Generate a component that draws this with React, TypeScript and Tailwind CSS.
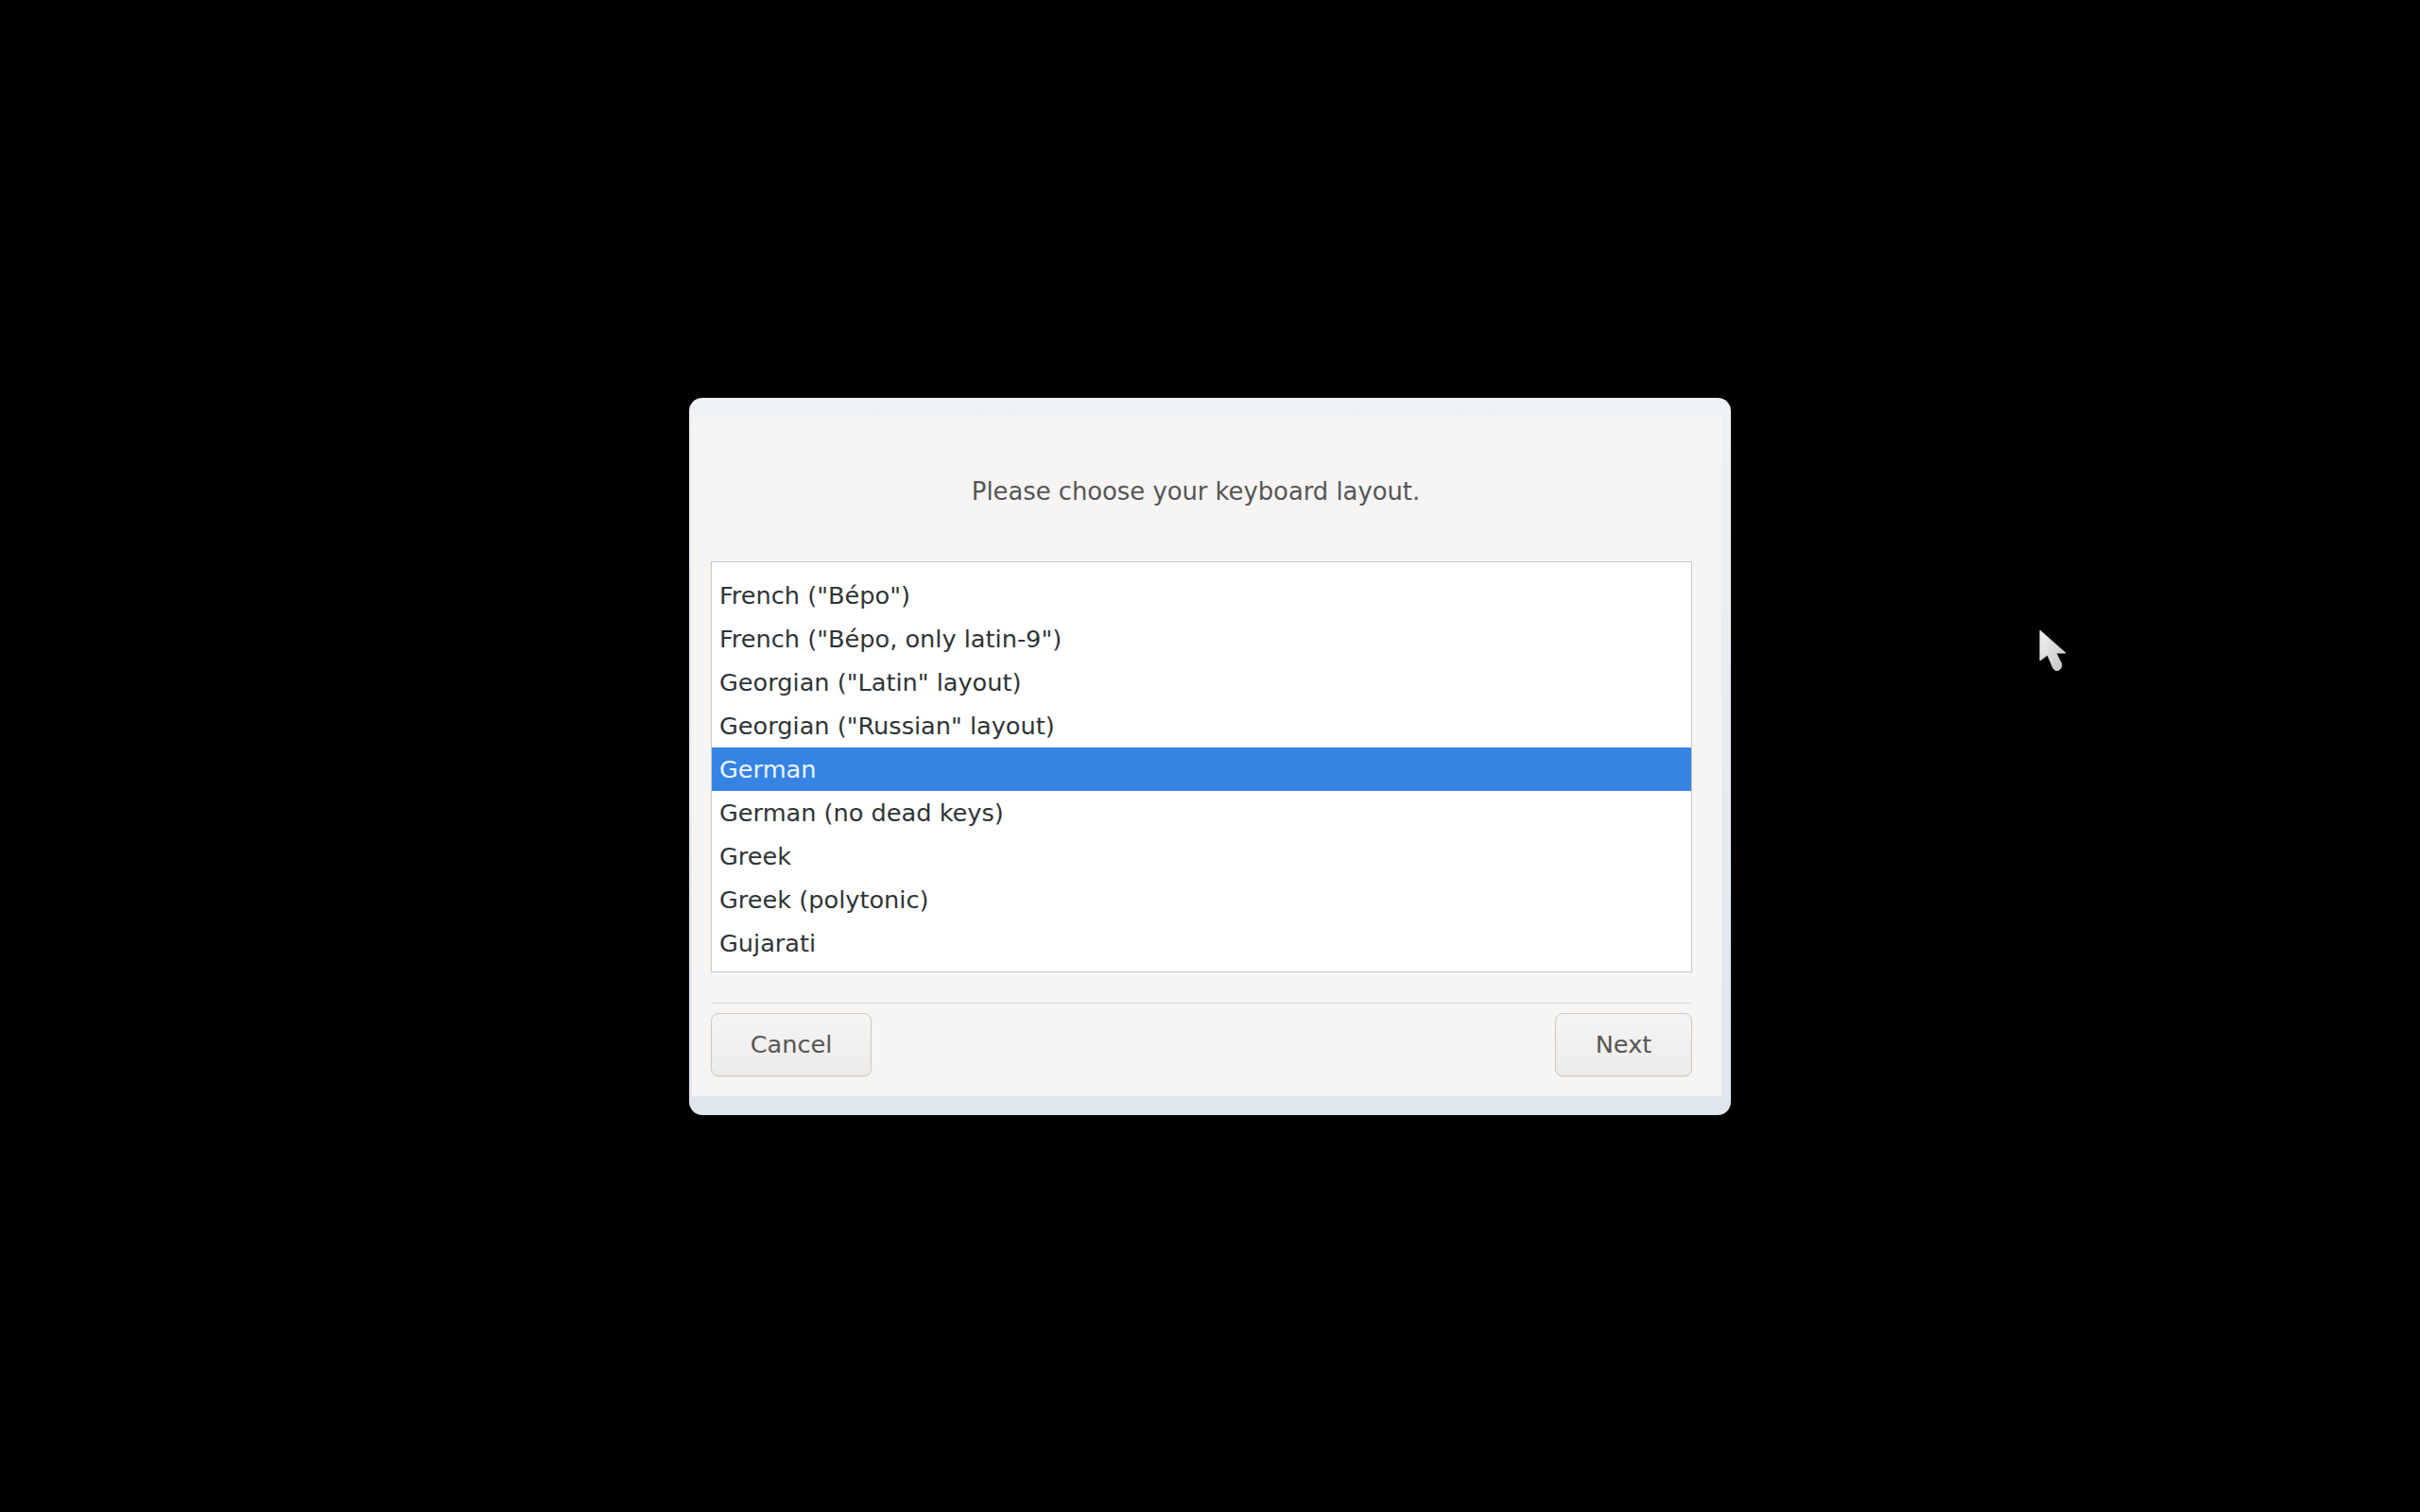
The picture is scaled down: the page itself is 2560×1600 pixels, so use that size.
const layouts = [
  'French ("Bépo")',
  'French ("Bépo, only latin-9")',
  'Georgian ("Latin" layout)',
  'Georgian ("Russian" layout)',
  "German",
  "German (no dead keys)",
  "Greek",
  "Greek (polytonic)",
  "Gujarati",
];

const selected = "German";

function Cursor() {
  return (
    <svg
      className="absolute left-[2156px] top-[665px]"
      width="34"
      height="50"
      viewBox="0 0 34 50"
      aria-hidden="true"
    >
      <defs>
        <linearGradient id="cur" x1="0" y1="0" x2="1" y2="1">
          <stop offset="0" stopColor="#f2f2f2" />
          <stop offset="1" stopColor="#c4c4c4" />
        </linearGradient>
      </defs>
      <path
        d="M2 2 L2 34 L10 28 L16 42 Q18 46 22 44 L24 42 Q26 39 24 36 L19 26 L29 26 Z"
        fill="url(#cur)"
        stroke="#d8d8d8"
        strokeWidth="1"
        strokeLinejoin="round"
      />
    </svg>
  );
}

function Button({ label, width }: { label: string; width: string }) {
  return (
    <button
      className={`${width} h-[67px] rounded-[8px] border border-[#cdc7c2] bg-gradient-to-b from-[#f6f5f4] to-[#edebe9] text-[25.6px] text-[#555753] shadow-[0_1px_0_rgba(0,0,0,0.06)]`}
    >
      {label}
    </button>
  );
}

export default function App() {
  return (
    <div
      className="relative flex h-[1600px] w-[2560px] items-center justify-center bg-black"
      style={{ fontFamily: '"DejaVu Sans", "Noto Sans", sans-serif' }}
    >
      <div className="flex h-[759px] w-[1102px] flex-col rounded-[14px] bg-gradient-to-b from-[#eef1f5] to-[#dfe6ee] pb-[20px] pl-[3px] pr-[10px] pt-[20px]">
        <div className="flex flex-1 flex-col bg-[#f6f5f4] pb-[19px] pl-[20px] pr-[31px]">
          <div className="mb-[55px] mt-[60px] h-[38px] pr-[12px] text-center text-[25.8px] leading-[38px] text-[#555555]">
            Please choose your keyboard layout.
          </div>
          <div className="h-[435px] border border-[#cdc7c2] bg-white pt-[12px]">
            {layouts.map((name) => (
              <div
                key={name}
                className={
                  name === selected
                    ? "h-[46px] bg-[#3584e4] pl-[8px] text-[25.6px] leading-[46px] text-[#eef4fc]"
                    : "h-[46px] pl-[8px] text-[25.6px] leading-[46px] text-[#2e3436]"
                }
              >
                {name}
              </div>
            ))}
          </div>
          <div className="mt-[32px] h-px bg-[#dedbd8]" />
          <div className="mt-[10px] flex justify-between">
            <Button label="Cancel" width="w-[170px]" />
            <Button label="Next" width="w-[145px]" />
          </div>
        </div>
      </div>
      <Cursor />
    </div>
  );
}
